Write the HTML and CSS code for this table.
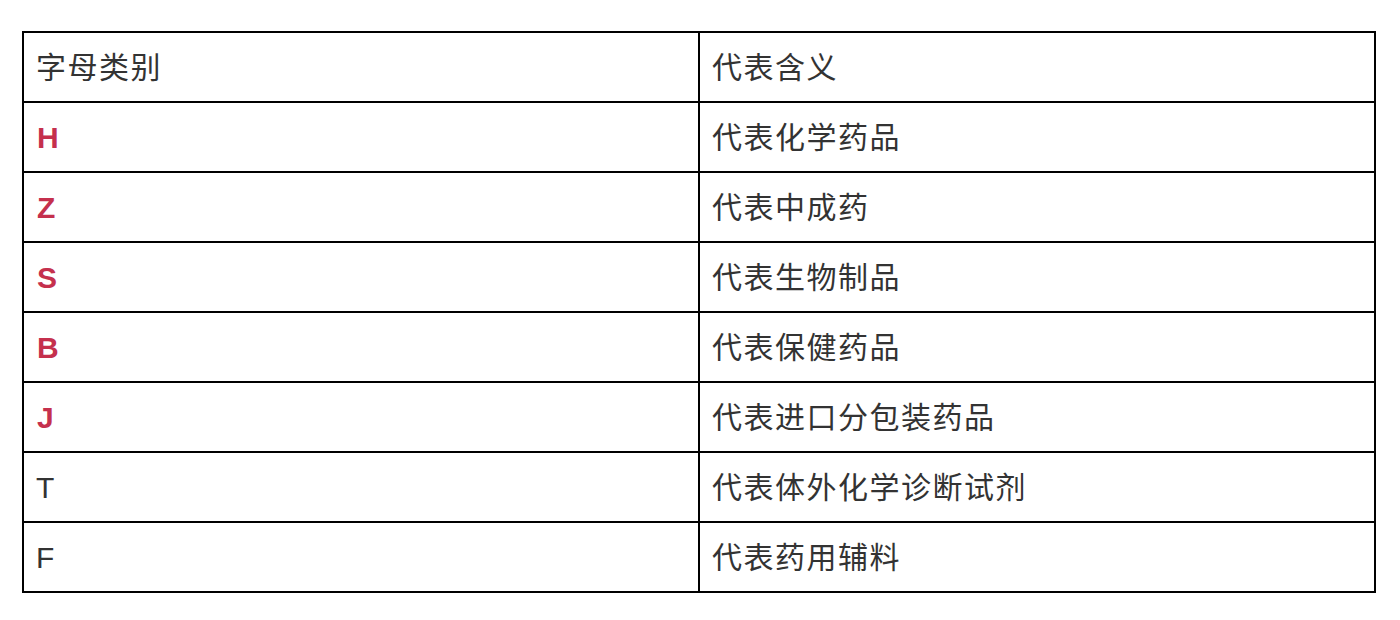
FILE: index.html
```html
<!DOCTYPE html>
<html lang="zh">
<head>
<meta charset="utf-8">
<link rel="stylesheet" href="styles.css">
</head>
<body>
<div class="wrap">
<table class="codes">
<tr><td class="c1">字母类别</td><td class="c2">代表含义</td></tr>
<tr><td class="c1"><span class="hl">H</span></td><td class="c2">代表化学药品</td></tr>
<tr><td class="c1"><span class="hl">Z</span></td><td class="c2">代表中成药</td></tr>
<tr><td class="c1"><span class="hl">S</span></td><td class="c2">代表生物制品</td></tr>
<tr><td class="c1"><span class="hl">B</span></td><td class="c2">代表保健药品</td></tr>
<tr><td class="c1"><span class="hl">J</span></td><td class="c2">代表进口分包装药品</td></tr>
<tr><td class="c1">T</td><td class="c2">代表体外化学诊断试剂</td></tr>
<tr><td class="c1">F</td><td class="c2">代表药用辅料</td></tr>
</table>
</div>
</body>
</html>
```

FILE: styles.css
```css
html, body {
  margin: 0;
  padding: 0;
  background: #ffffff;
}
.wrap {
  padding: 31px 24px 0 22px;
}
.codes {
  width: 1354px;
  border-collapse: collapse;
  font-family: "Liberation Sans", "Noto Sans CJK SC", sans-serif;
  font-size: 30px;
  color: #333333;
}
.codes td {
  border: 2px solid #000000;
  height: 70px;
  padding: 2px 14px 0 12px;
  vertical-align: middle;
  box-sizing: border-box;
  line-height: 1.2;
  letter-spacing: 1.5px;
}
.codes .c1 {
  width: 676px;
}
.hl {
  color: #c5304d;
  font-weight: bold;
  letter-spacing: 0;
  margin-left: 1px;
}
```
